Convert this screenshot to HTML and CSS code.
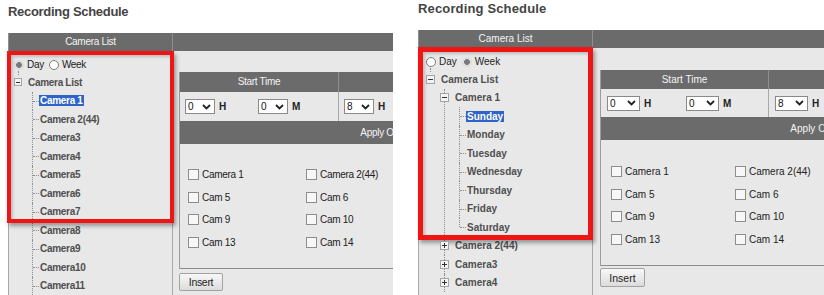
FILE: index.html
```html
<!DOCTYPE html>
<html lang="en">
<head>
<meta charset="utf-8">
<title>Recording Schedule</title>
<link rel="stylesheet" href="styles.css">
</head>
<body>
<div class="shots">

  <section class="panel p1">
    <h1 class="title">Recording Schedule</h1>
    <div class="grid">
      <div class="hd tree-hd">Camera List</div>
      <div class="hd"></div>
      <div class="tree">
        <div class="radios">
          <span class="radio"><span class="rb on"></span>Day</span>
          <span class="radio"><span class="rb"></span>Week</span>
        </div>
        <div class="root"><span class="tog minus"></span><span class="lbl">Camera List</span></div>
        <ul class="kids">
          <li class="leaf"><div class="item"><span class="lbl sel">Camera 1</span></div></li>
          <li class="leaf"><div class="item"><span class="lbl">Camera 2(44)</span></div></li>
          <li class="leaf"><div class="item"><span class="lbl">Camera3</span></div></li>
          <li class="leaf"><div class="item"><span class="lbl">Camera4</span></div></li>
          <li class="leaf"><div class="item"><span class="lbl">Camera5</span></div></li>
          <li class="leaf"><div class="item"><span class="lbl">Camera6</span></div></li>
          <li class="leaf"><div class="item"><span class="lbl">Camera7</span></div></li>
          <li class="leaf"><div class="item"><span class="lbl">Camera8</span></div></li>
          <li class="leaf"><div class="item"><span class="lbl">Camera9</span></div></li>
          <li class="leaf"><div class="item"><span class="lbl">Camera10</span></div></li>
          <li class="leaf"><div class="item"><span class="lbl">Camera11</span></div></li>
        </ul>
      </div>
      <div class="content">
        <div class="inner">
          <div class="hdrow"><div class="cell c1">Start Time</div><div class="cell c2"></div></div>
          <div class="timerow">
            <div class="cell c1 pairs">
              <span class="pair"><span class="select"><span class="val">0</span><svg class="chev" viewBox="0 0 9 6"><path d="M1 1l3.5 3.5L8 1"/></svg></span><b>H</b></span>
              <span class="pair"><span class="select"><span class="val">0</span><svg class="chev" viewBox="0 0 9 6"><path d="M1 1l3.5 3.5L8 1"/></svg></span><b>M</b></span>
            </div>
            <div class="cell c2 pairs">
              <span class="pair"><span class="select"><span class="val">8</span><svg class="chev" viewBox="0 0 9 6"><path d="M1 1l3.5 3.5L8 1"/></svg></span><b>H</b></span>
            </div>
          </div>
          <div class="hdrow apply">Apply Options</div>
          <div class="cbarea">
            <div class="cbgrid">
              <span class="cb"><span class="box"></span>Camera 1</span>
              <span class="cb"><span class="box"></span>Camera 2(44)</span>
              <span class="cb"><span class="box"></span>Cam 5</span>
              <span class="cb"><span class="box"></span>Cam 6</span>
              <span class="cb"><span class="box"></span>Cam 9</span>
              <span class="cb"><span class="box"></span>Cam 10</span>
              <span class="cb"><span class="box"></span>Cam 13</span>
              <span class="cb"><span class="box"></span>Cam 14</span>
            </div>
          </div>
        </div>
        <button class="btn" type="button">Insert</button>
      </div>
    </div>
    <div class="mark"></div>
  </section>

  <section class="panel p2">
    <h1 class="title">Recording Schedule</h1>
    <div class="grid">
      <div class="hd tree-hd">Camera List</div>
      <div class="hd"></div>
      <div class="tree">
        <div class="radios">
          <span class="radio"><span class="rb"></span>Day</span>
          <span class="radio"><span class="rb on"></span>Week</span>
        </div>
        <div class="root"><span class="tog minus"></span><span class="lbl">Camera List</span></div>
        <ul class="kids">
          <li class="node">
            <div class="item"><span class="tog minus"></span><span class="lbl">Camera 1</span></div>
            <ul class="days">
              <li class="leaf"><div class="item"><span class="lbl sel">Sunday</span></div></li>
              <li class="leaf"><div class="item"><span class="lbl">Monday</span></div></li>
              <li class="leaf"><div class="item"><span class="lbl">Tuesday</span></div></li>
              <li class="leaf"><div class="item"><span class="lbl">Wednesday</span></div></li>
              <li class="leaf"><div class="item"><span class="lbl">Thursday</span></div></li>
              <li class="leaf"><div class="item"><span class="lbl">Friday</span></div></li>
              <li class="leaf"><div class="item"><span class="lbl">Saturday</span></div></li>
            </ul>
          </li>
          <li class="node"><div class="item"><span class="tog plus"></span><span class="lbl">Camera 2(44)</span></div></li>
          <li class="node"><div class="item"><span class="tog plus"></span><span class="lbl">Camera3</span></div></li>
          <li class="node"><div class="item"><span class="tog plus"></span><span class="lbl">Camera4</span></div></li>
        </ul>
      </div>
      <div class="content">
        <div class="inner">
          <div class="hdrow"><div class="cell c1">Start Time</div><div class="cell c2"></div></div>
          <div class="timerow">
            <div class="cell c1 pairs">
              <span class="pair"><span class="select"><span class="val">0</span><svg class="chev" viewBox="0 0 9 6"><path d="M1 1l3.5 3.5L8 1"/></svg></span><b>H</b></span>
              <span class="pair"><span class="select"><span class="val">0</span><svg class="chev" viewBox="0 0 9 6"><path d="M1 1l3.5 3.5L8 1"/></svg></span><b>M</b></span>
            </div>
            <div class="cell c2 pairs">
              <span class="pair"><span class="select"><span class="val">8</span><svg class="chev" viewBox="0 0 9 6"><path d="M1 1l3.5 3.5L8 1"/></svg></span><b>H</b></span>
            </div>
          </div>
          <div class="hdrow apply">Apply Options</div>
          <div class="cbarea">
            <div class="cbgrid">
              <span class="cb"><span class="box"></span>Camera 1</span>
              <span class="cb"><span class="box"></span>Camera 2(44)</span>
              <span class="cb"><span class="box"></span>Cam 5</span>
              <span class="cb"><span class="box"></span>Cam 6</span>
              <span class="cb"><span class="box"></span>Cam 9</span>
              <span class="cb"><span class="box"></span>Cam 10</span>
              <span class="cb"><span class="box"></span>Cam 13</span>
              <span class="cb"><span class="box"></span>Cam 14</span>
            </div>
          </div>
        </div>
        <button class="btn" type="button">Insert</button>
      </div>
    </div>
    <div class="mark"></div>
  </section>

</div>
</body>
</html>
```

FILE: styles.css
```css
* { box-sizing: border-box; }

html, body {
  margin: 0;
  padding: 0;
  background: #fff;
  overflow: hidden;
}

body {
  font-family: "Liberation Sans", Arial, sans-serif;
  font-size: 10px;
  color: #222;
}

.shots {
  display: flex;
  height: 295px;
}

/* ---------- panel variables ---------- */
.panel {
  position: relative;
  flex: none;
  height: 295px;
  display: flex;
  flex-direction: column;
  letter-spacing: var(--ls);
}

.p1 {
  margin-left: 8px;
  width: 385px;
  --ls: -0.3px;
  --tw: 165px;
  --tp: 5px;
  --tog: 8px;
  --cp: 6px;
  --ct: 21px;
  --iw: 420px;
  --c1w: 159px;
  --hh: 20px;
  --th: 29px;
  --pp: 5px;
  --pw: 73px;
  --sw: 30px;
  --cbh: 125px;
  --cbt: 19px;
  --cbp: 8px;
  --cw: 118px;
  --bt: 4px;
  --bw: 44px;
  --bh: 18px;
}

.p2 {
  margin-left: 25px;
  width: 406px;
  --ls: 0px;
  --tw: 175px;
  --tp: 7px;
  --tog: 9px;
  --cp: 7px;
  --ct: 22px;
  --iw: 442px;
  --c1w: 168px;
  --hh: 19px;
  --th: 28px;
  --pp: 6px;
  --pw: 79px;
  --sw: 33px;
  --cbh: 126px;
  --cbt: 20px;
  --cbp: 10px;
  --cw: 124px;
  --bt: 2px;
  --bw: 45px;
  --bh: 19px;
}

/* ---------- title ---------- */
.title {
  margin: 0;
  flex: none;
  font-size: 13px;
  line-height: 16px;
  font-weight: bold;
  color: #444;
}

.p1 .title { height: 33px; padding-top: 4px; letter-spacing: -0.3px; }
.p2 .title { height: 30px; padding-top: 1px; letter-spacing: 0.15px; }

/* ---------- layout grid ---------- */
.grid {
  flex: 1;
  display: grid;
  grid-template-columns: var(--tw) minmax(0, 1fr);
  grid-template-rows: 18px 1fr;
  overflow: hidden;
}

.hd {
  background: #6b6b6b;
  color: #f3f3f3;
  text-align: center;
  line-height: 18px;
}

.tree-hd { border-right: 1px solid #8e8e8e; border-left: 1px solid #8e8e8e; }

/* ---------- tree ---------- */
.tree {
  background: #e8e8e8;
  border-left: 1px solid #a9a9a9;
  border-right: 1px solid #a9a9a9;
  padding: 5px 0 0 var(--tp);
  overflow: hidden;
}

.radios {
  height: 17px;
  display: flex;
  align-items: center;
  gap: 5px;
  color: #222;
}

.radio {
  display: flex;
  align-items: center;
}

.rb {
  width: 10px;
  height: 10px;
  border-radius: 50%;
  border: 1px solid #7c7c7c;
  background: #fff;
  margin-right: 3px;
}

.rb.on {
  border-color: #d9d9d9;
  background: radial-gradient(circle, #7a7a7a 0 2.6px, #e6e6e6 3.2px);
}

.root {
  position: relative;
  height: 18.5px;
  display: flex;
  align-items: center;
}

.root::before {
  content: "";
  position: absolute;
  left: calc(var(--tog) / 2 - 0.5px);
  top: -2px;
  height: 4px;
  border-left: 1px dotted #8f8f8f;
}

.root .lbl { margin-left: 5px; }

.tog {
  position: relative;
  z-index: 1;
  flex: none;
  display: grid;
  place-items: center;
  width: var(--tog);
  height: var(--tog);
  border: 1px solid #a4a4a4;
  background: #f3f3f3;
}

.tog::before,
.tog::after {
  content: "";
  grid-area: 1 / 1;
  background: #333;
}

.tog::before { width: calc(var(--tog) - 4px); height: 1px; }
.plus::after { width: 1px; height: calc(var(--tog) - 4px); }

.kids,
.days {
  list-style: none;
  margin: 0 0 0 18px;
  padding: 0;
}

.days { margin-left: 15px; }

.kids li,
.days li {
  position: relative;
  padding-left: 7px;
}

.kids li::before,
.days li::before {
  content: "";
  position: absolute;
  left: 0;
  top: 0;
  bottom: 0;
  border-left: 1px dotted #8f8f8f;
}

.days li:last-child::before {
  bottom: auto;
  height: 9px;
}

.leaf::after {
  content: "";
  position: absolute;
  left: 1px;
  top: 9px;
  width: 6px;
  border-top: 1px dotted #8f8f8f;
}

.kids li.node { padding-left: 0; }

.node > .item > .tog { margin-left: calc(var(--tog) / -2 + 0.5px); }
.node > .item > .lbl { margin-left: 5px; }

.item {
  height: 18.5px;
  display: flex;
  align-items: center;
}

.lbl {
  font-weight: bold;
  color: #4f4f4f;
  padding: 0 1px;
  line-height: 11px;
}

.lbl.sel {
  background: #2e63c7;
  color: #fff;
}

/* ---------- right content ---------- */
.content {
  background: #e8e8e8;
  padding: var(--ct) 0 0 var(--cp);
  min-width: 0;
  overflow: hidden;
}

.inner {
  width: var(--iw);
  border-left: 1px solid #9c9c9c;
}

.hdrow {
  display: flex;
  height: var(--hh);
  line-height: var(--hh);
  background: #6b6b6b;
  color: #f3f3f3;
}

.hdrow .cell { text-align: center; }

.c1 {
  flex: none;
  width: var(--c1w);
  border-right: 1px solid #8e8e8e;
}

.c2 { flex: 1; }

.timerow {
  display: flex;
  height: var(--th);
  background: #e8e8e8;
}

.timerow .c1 { border-right-color: #a9a9a9; }

.pairs {
  display: grid;
  grid-template-columns: var(--pw) auto;
  justify-content: start;
  align-items: center;
  padding-left: var(--pp);
}

.pair {
  display: flex;
  align-items: center;
}

.pair b {
  margin-left: 4px;
  color: #222;
}

.select {
  display: flex;
  align-items: center;
  width: var(--sw);
  height: 15px;
  border: 1px solid #8a8a8a;
  background: #fff;
  padding-left: 2px;
  color: #111;
}

.chev {
  width: 9px;
  height: 6px;
  margin-left: auto;
  margin-right: 3px;
  fill: none;
  stroke: #222;
  stroke-width: 1.8;
}

.apply {
  display: block;
  height: 23px;
  line-height: 23px;
  text-align: center;
}

.cbarea {
  height: var(--cbh);
  border-bottom: 1px solid #8c8c8c;
  border-right: 1px solid #8c8c8c;
  background: #e8e8e8;
}

.cbgrid {
  display: grid;
  grid-template-columns: repeat(2, var(--cw));
  grid-auto-rows: 22.7px;
  padding: var(--cbt) 0 0 var(--cbp);
}

.cb {
  display: flex;
  align-items: center;
  color: #222;
}

.box {
  width: 11px;
  height: 11px;
  border: 1px solid #8d8d8d;
  background: #f7f7f7;
  margin-right: 3px;
}

.btn {
  display: block;
  margin-top: var(--bt);
  width: var(--bw);
  height: var(--bh);
  padding: 0;
  font: inherit;
  font-size: 10.5px;
  letter-spacing: var(--ls);
  color: #222;
  border: 1px solid #a2a2a2;
  border-radius: 2px;
  background: linear-gradient(#f8f8f8, #dcdcdc);
}

/* ---------- red annotation frame ---------- */
.mark {
  position: absolute;
  pointer-events: none;
  border: 4px solid #f01515;
  box-shadow: 2px 3px 4px rgba(0, 0, 0, 0.35), inset 2px 2px 3px rgba(0, 0, 0, 0.18);
}

.p1 .mark { left: -1px; top: 51px; width: 167px; height: 172px; }
.p2 .mark { left: 0; top: 47px; width: 175px; height: 193px; border-width: 5px; }
```
